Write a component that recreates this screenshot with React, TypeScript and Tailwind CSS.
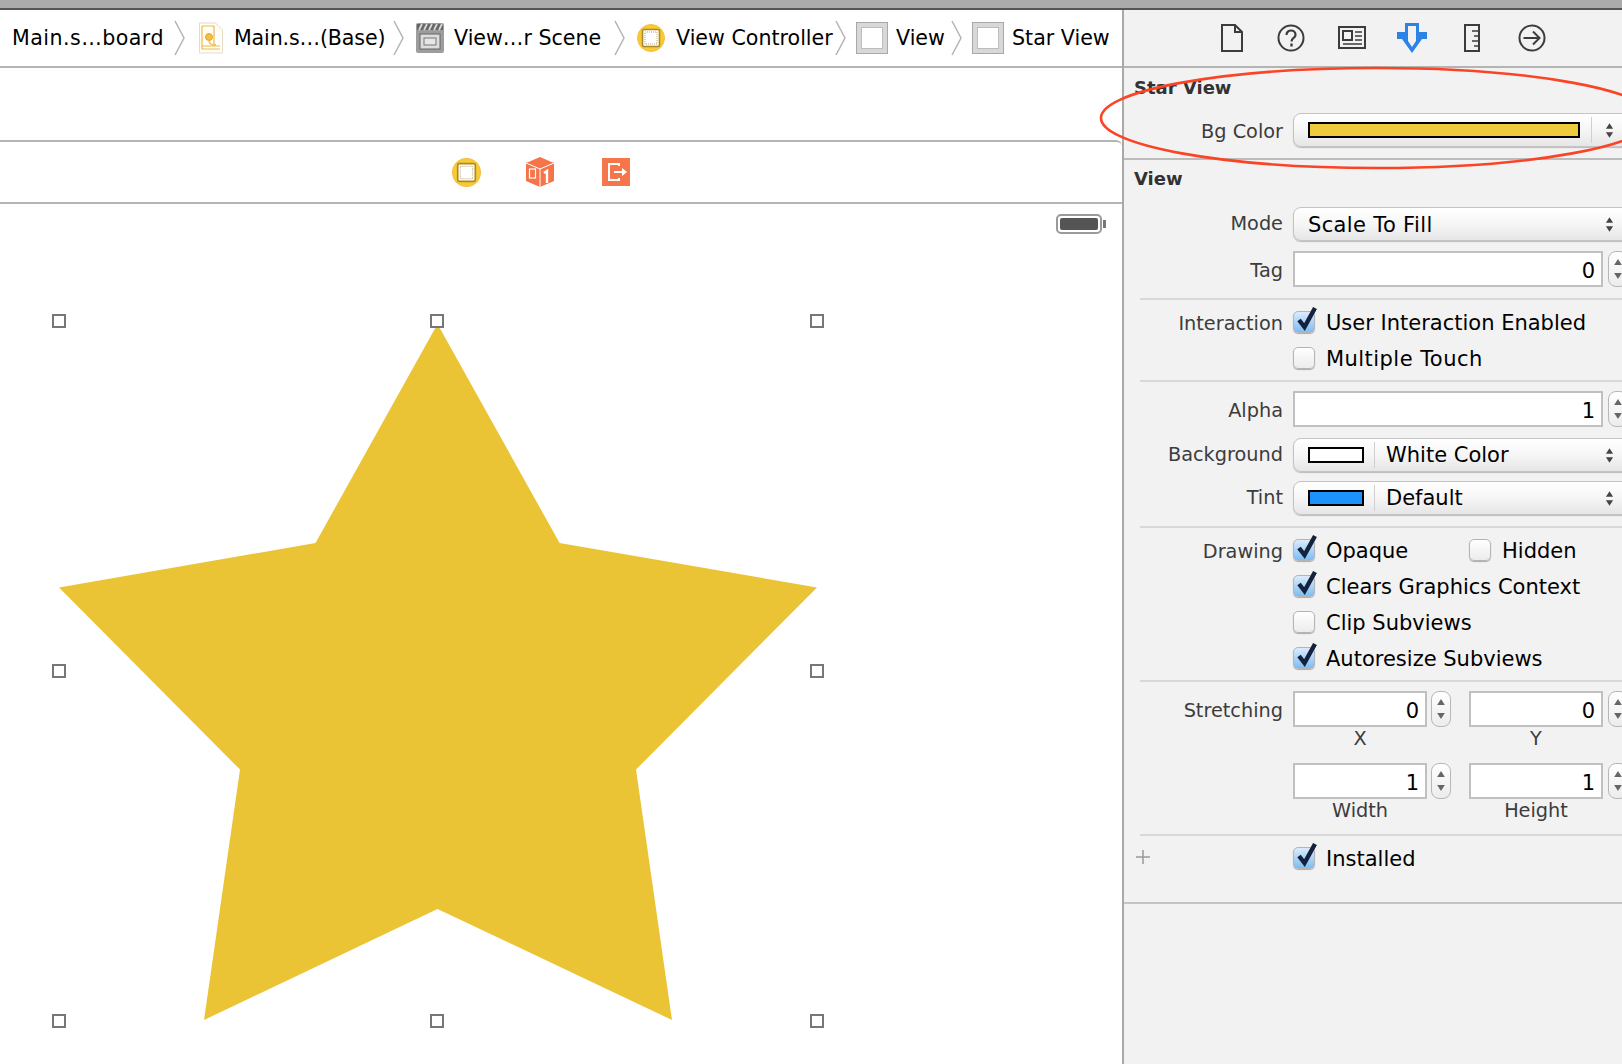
const STAR = '378.5,3 500.6,222 758,266.5 577,448.6 613,699 378.5,588 145,699 181,448.6 0,266.5 256.5,222';

function Chevron({ className }: { className: string }) {
  return (
    <svg width="11" height="36" viewBox="0 0 11 36" fill="none" className={className}>
      <path d="M1 1l9 17-9 17" stroke="#b4b4b4" strokeWidth="1.5" />
    </svg>
  );
}

function VCIcon({ size }: { size: number }) {
  return (
    <svg width={size} height={size} viewBox="0 0 28 28" className="shrink-0">
      <circle cx="14" cy="14" r="13.5" fill="#fbc931" stroke="#f2c04a" />
      <rect x="5.5" y="5.5" width="17" height="17" rx="1.5" fill="#fff" stroke="#a88a2c" strokeWidth="1.6" />
      <rect x="8" y="8" width="12" height="12" fill="#fff" stroke="#b9a66a" strokeDasharray="1 1" />
    </svg>
  );
}

function BoxIcon({ className }: { className: string }) {
  return (
    <div className={`w-8 h-8 shrink-0 bg-[#d8d8d8] border border-[#a8a8a8] p-[4px] ${className}`}>
      <div className="w-full h-full bg-white border border-[#bdbdbd]" />
    </div>
  );
}

function Crumb({ label, className }: { label: string; className: string }) {
  return <span className={`whitespace-nowrap text-black text-[20.6px] ${className}`}>{label}</span>;
}

function Arrows() {
  return (
    <svg width="9" height="17" viewBox="0 0 10 18" className="shrink-0">
      <path d="M5 1l4 6H1zM5 17l4-6H1z" fill="#444" />
    </svg>
  );
}

function Popup({ children }: { children: React.ReactNode }) {
  return (
    <div className="relative flex items-center h-[34px] w-[345px] rounded-lg border border-[#c4c4c4] bg-linear-to-b from-white via-[#f6f6f6] to-[#e6e6e6] text-black shadow-[0_1px_1px_#bbb] pl-[14px]">
      {children}
      <div className="absolute left-[311px] top-0 flex items-center h-full">
        <Arrows />
      </div>
    </div>
  );
}

function Stepper({ className }: { className: string }) {
  return (
    <div className={`flex flex-col items-center justify-center gap-[8px] w-[20px] h-[36px] shrink-0 rounded-lg border border-[#b8b8b8] bg-linear-to-b from-white to-[#ececec] ${className}`}>
      <svg width="8" height="6" viewBox="0 0 9 7"><path d="M4.5 0l4.5 7H0z" fill="#666" /></svg>
      <svg width="8" height="6" viewBox="0 0 9 7"><path d="M4.5 7L0 0h9z" fill="#666" /></svg>
    </div>
  );
}

function Field({ value, w }: { value: string; w: string }) {
  return (
    <div className={`flex items-center justify-end h-[36px] shrink-0 bg-white border-2 border-[#c0c0c0] pr-[6px] pt-[3px] text-black ${w}`}>
      {value}
    </div>
  );
}

function Check({ on }: { on?: boolean }) {
  return (
    <div
      className={`relative w-[22px] h-[22px] shrink-0 rounded-[5px] border border-[#b5b5b5] shadow-[0_1px_1px_#aaa] ${
        on ? 'bg-linear-to-b from-[#dcebfb] to-[#7dbcf4]' : 'bg-linear-to-b from-white to-[#ececec]'
      }`}
    >
      {on && (
        <svg width="24" height="28" viewBox="0 0 24 28" fill="none" className="absolute left-[1px] -top-[7px]">
          <path d="M4 15l5.5 7L20 3" stroke="#13233e" strokeWidth="4.4" />
        </svg>
      )}
    </div>
  );
}

function Row({ label, children, className, low }: { label?: string; children: React.ReactNode; className?: string; low?: boolean }) {
  return (
    <div className={`flex items-center ${className ?? ''}`}>
      <div className={`w-[159px] shrink-0 text-right text-[19.3px] text-[#3c3c3c] whitespace-nowrap ${low ? 'pt-[3px]' : ''}`}>{label}</div>
      <div className="ml-[10px] flex items-center">{children}</div>
    </div>
  );
}

function CheckRow({ label, text, on, textClass }: { label?: string; text: string; on?: boolean; textClass?: string }) {
  return (
    <Row label={label} className="h-[36px]" low>
      <Check on={on} />
      <span className={`ml-[11px] pt-[2px] text-black whitespace-nowrap ${textClass ?? ''}`}>{text}</span>
    </Row>
  );
}

function Divider({ className }: { className: string }) {
  return <div className={`ml-[16px] h-[2px] bg-[#d8d8d8] ${className}`} />;
}

function Handle({ className }: { className: string }) {
  return <div className={`absolute w-[14px] h-[14px] bg-white border-2 border-[#777] -translate-x-1/2 -translate-y-1/2 ${className}`} />;
}

function Breadcrumb() {
  return (
    <div className="flex items-center h-[56px] border-b-2 border-[#b4b4b4] box-content overflow-hidden">
      <Crumb label="Main.s…board" className="ml-[12px] w-[151px] tracking-[0.45px]" />
      <Chevron className="ml-[11px] shrink-0" />
      <svg width="26" height="32" viewBox="0 0 26 32" fill="none" className="ml-[13px] shrink-0">
        <path d="M1.5 1h16l7 7v23h-23z" fill="#fffef8" stroke="#e4dcc4" />
        <path d="M4 4h12v20M4 4v23h18M4 24h18" stroke="#eeb94a" strokeWidth="1.2" />
        <circle cx="11" cy="15" r="3.5" fill="#f5c040" stroke="#e8a32c" />
        <path d="M11 18c0 4 2 5 7 5" stroke="#eeb94a" strokeWidth="1.3" />
      </svg>
      <Crumb label="Main.s…(Base)" className="ml-[10px] w-[148px] -tracking-[0.15px]" />
      <Chevron className="ml-[11px] shrink-0" />
      <svg width="28" height="30" viewBox="0 0 28 30" fill="none" className="ml-[12px] shrink-0">
        <rect width="28" height="30" rx="2" fill="#9d9d9d" />
        <path d="M1 1h26v6H1z" fill="#666" />
        <path d="M3 7l3-6M8 7l3-6M13 7l3-6M18 7l3-6M23 7l3-6" stroke="#d8d8d8" strokeWidth="1.8" />
        <rect x="4" y="11" width="20" height="15" fill="#ddd" stroke="#666" />
        <rect x="8" y="15" width="12" height="7" fill="#e6e6e6" stroke="#777" />
      </svg>
      <Crumb label="View…r Scene" className="ml-[10px] w-[148px]" />
      <Chevron className="ml-[12px] shrink-0" />
      <div className="ml-[12px]"><VCIcon size={28} /></div>
      <Crumb label="View Controller" className="ml-[11px] w-[157px]" />
      <Chevron className="ml-[2px] shrink-0" />
      <BoxIcon className="ml-[10px]" />
      <Crumb label="View" className="ml-[8px] w-[49px]" />
      <Chevron className="ml-[6px] shrink-0" />
      <BoxIcon className="ml-[10px]" />
      <Crumb label="Star View" className="ml-[8px] w-[98px]" />
    </div>
  );
}

function SceneBar() {
  return (
    <div className="flex items-center h-[60px] border-y-2 border-[#b4b4b4] box-content rounded-tr-[6px]">
      <div className="ml-[452px]"><VCIcon size={29} /></div>
      <svg width="28" height="30" viewBox="0 0 28 30" className="ml-[45px] shrink-0">
        <path d="M14 0l14 6v18l-14 6-14-6V6z" fill="#f5744a" />
        <path d="M14 12v18M0 6l14 6 14-6" stroke="#fff" strokeWidth="1" fill="none" />
        <rect x="3.5" y="12" width="6" height="9" fill="none" stroke="#fff" strokeWidth="1.2" />
        <path d="M18 16l3-2v12" stroke="#fff" strokeWidth="2.4" fill="none" />
      </svg>
      <svg width="28" height="28" viewBox="0 0 28 28" className="ml-[48px] shrink-0">
        <rect width="28" height="28" fill="#f6764c" />
        <path d="M17 8V6H7v16h10v-2" stroke="#fff" strokeWidth="2" fill="none" />
        <path d="M12 13h8v-3l5 4-5 4v-3h-8z" fill="#fff" />
      </svg>
    </div>
  );
}

function Canvas() {
  return (
    <div className="pt-[10px]">
      <div className="flex justify-end pr-[16px]">
        <svg width="50" height="20" viewBox="0 0 50 20">
          <rect x="1" y="1" width="44" height="18" rx="4" fill="#fff" stroke="#9a9a9a" strokeWidth="2" />
          <rect x="4" y="4" width="38" height="12" rx="2" fill="#555" />
          <rect x="47" y="6" width="3" height="8" fill="#777" />
        </svg>
      </div>
      <div className="relative ml-[59px] mt-[87px] w-[758px] h-[700px]">
        <svg width="758" height="700" viewBox="0 0 758 700">
          <polygon points={STAR} fill="#ebc436" />
        </svg>
        <Handle className="left-0 top-0" />
        <Handle className="left-[378px] top-0" />
        <Handle className="left-full top-0" />
        <Handle className="left-0 top-1/2" />
        <Handle className="left-full top-1/2" />
        <Handle className="left-0 top-full" />
        <Handle className="left-[378px] top-full" />
        <Handle className="left-full top-full" />
      </div>
    </div>
  );
}

function InspectorTabs() {
  return (
    <div className="flex items-center h-[56px] border-b-2 border-[#b4b4b4] box-content text-[#333]">
      <svg width="24" height="28" viewBox="0 0 24 28" fill="none" stroke="#3c3c3c" strokeWidth="2" className="ml-[96px]">
        <path d="M2 1h13l7 7v19H2zM15 1v7h7" />
      </svg>
      <svg width="28" height="28" viewBox="0 0 28 28" fill="none" stroke="#3c3c3c" strokeWidth="2" className="ml-[33px]">
        <circle cx="14" cy="14" r="12.5" />
        <path d="M9.5 11c0-6 9-6 9 0 0 3-4 3-4 6.5" strokeWidth="2.2" />
        <path d="M14.5 19.5v3" strokeWidth="2.4" />
      </svg>
      <svg width="28" height="24" viewBox="0 0 28 24" fill="none" stroke="#3c3c3c" strokeWidth="2" className="ml-[33px]">
        <rect x="1" y="1" width="26" height="21" />
        <rect x="5" y="5" width="9" height="9" />
        <path d="M17 6h7M17 10h7M17 14h7M5 18h19" strokeWidth="1.6" />
      </svg>
      <svg width="30" height="30" viewBox="0 0 30 30" className="ml-[31px]">
        <path d="M8 0h14v9h8v7h-5L15 30 5 16H0V9h8z" fill="#2b83e6" />
        <path d="M11 3h8v15l-4 6-4-6z" fill="#f2f2f2" />
      </svg>
      <svg width="16" height="28" viewBox="0 0 16 28" fill="none" stroke="#3c3c3c" strokeWidth="2" className="ml-[37px]">
        <rect x="1" y="1" width="14" height="26" />
        <path d="M8 7h7M10 12h5M8 17h7M10 22h5" strokeWidth="1.6" />
      </svg>
      <svg width="28" height="28" viewBox="0 0 28 28" fill="none" stroke="#3c3c3c" strokeWidth="2" className="ml-[38px]">
        <circle cx="14" cy="14" r="12.5" />
        <path d="M5.5 14h16M15 7.5l6.5 6.5-6.5 6.5" />
      </svg>
    </div>
  );
}

function Swatch({ color, w }: { color: string; w: string }) {
  return <div className={`h-[16px] border-2 border-black shrink-0 ${color} ${w}`} />;
}

function SwatchPopup({ color, text }: { color: string; text: string }) {
  return (
    <Popup>
      <Swatch color={color} w="w-[56px]" />
      <div className="ml-[10px] w-[1px] h-[26px] bg-[#d0d0d0]" />
      <span className="ml-[11px]">{text}</span>
    </Popup>
  );
}

export default function App() {
  return (
    <div className="relative w-[1622px] h-[1064px] overflow-hidden bg-white font-['DejaVu_Sans',sans-serif] text-[21px] leading-[22px]">
      <div className="h-[8px] bg-[#ababab]" />
      <div className="h-[2px] bg-[#555]" />
      <div className="flex h-[1054px]">
        <div className="w-[1122px] shrink-0">
          <Breadcrumb />
          <div className="h-[72px]" />
          <SceneBar />
          <Canvas />
        </div>
        <div className="w-[2px] shrink-0 bg-[#a9a9a9]" />
        <div className="flex-1 min-w-0 overflow-hidden bg-[#f2f2f2]">
          <InspectorTabs />
          <div className="h-[92px] border-b-2 border-[#bcbcbc] pt-[9px]">
            <div className="ml-[10px] text-[18px] font-bold text-[#333]">Star View</div>
            <Row label="Bg Color" className="mt-[14px]" low>
              <Popup>
                <Swatch color="bg-[#eecb3a]" w="w-[272px]" />
                <div className="ml-[11px] w-[1px] h-[26px] bg-[#d0d0d0]" />
              </Popup>
            </Row>
          </div>
          <div className="pt-[8px]">
            <div className="ml-[10px] text-[18px] font-bold text-[#333]">View</div>
            <Row label="Mode" className="mt-[17px]">
              <Popup><span className="pt-[1px] tracking-[0.35px]">Scale To Fill</span></Popup>
            </Row>
            <Row label="Tag" className="mt-[10px]" low>
              <Field value="0" w="w-[310px]" />
              <Stepper className="ml-[5px]" />
            </Row>
            <Divider className="mt-[11px]" />
            <div className="mt-[4px]">
              <CheckRow label="Interaction" text="User Interaction Enabled" on />
              <CheckRow text="Multiple Touch" textClass="tracking-[0.45px]" />
            </div>
            <Divider className="mt-[4px]" />
            <Row label="Alpha" className="mt-[9px]" low>
              <Field value="1" w="w-[310px]" />
              <Stepper className="ml-[5px]" />
            </Row>
            <Row label="Background" className="mt-[11px]">
              <SwatchPopup color="bg-white" text="White Color" />
            </Row>
            <Row label="Tint" className="mt-[9px]">
              <SwatchPopup color="bg-[#1c92fb]" text="Default" />
            </Row>
            <Divider className="mt-[11px]" />
            <div className="mt-[4px]">
              <Row label="Drawing" className="h-[36px]" low>
                <Check on />
                <span className="ml-[11px] pt-[2px] w-[143px] text-black">Opaque</span>
                <Check />
                <span className="ml-[11px] pt-[2px] text-black">Hidden</span>
              </Row>
              <CheckRow text="Clears Graphics Context" on />
              <CheckRow text="Clip Subviews" />
              <CheckRow text="Autoresize Subviews" on />
            </div>
            <Divider className="mt-[4px]" />
            <Row label="Stretching" className="mt-[9px]" low>
              <Field value="0" w="w-[134px]" />
              <Stepper className="ml-[4px]" />
              <div className="ml-[18px] flex items-center">
                <Field value="0" w="w-[134px]" />
                <Stepper className="ml-[5px]" />
              </div>
            </Row>
            <Row>
              <div className="w-[134px] h-[24px] flex items-center justify-center text-[19.3px] text-[#3c3c3c]">X</div>
              <div className="ml-[42px] w-[134px] h-[24px] flex items-center justify-center text-[19.3px] text-[#3c3c3c]">Y</div>
            </Row>
            <Row className="mt-[12px]">
              <Field value="1" w="w-[134px]" />
              <Stepper className="ml-[4px]" />
              <div className="ml-[18px] flex items-center">
                <Field value="1" w="w-[134px]" />
                <Stepper className="ml-[5px]" />
              </div>
            </Row>
            <Row>
              <div className="w-[134px] h-[24px] flex items-center justify-center text-[19.3px] text-[#3c3c3c]">Width</div>
              <div className="ml-[42px] w-[134px] h-[24px] flex items-center justify-center text-[19.3px] text-[#3c3c3c]">Height</div>
            </Row>
            <Divider className="mt-[11px]" />
            <div className="relative mt-[4px]">
              <CheckRow text="Installed" on />
              <svg width="16" height="16" viewBox="0 0 16 16" className="absolute left-[11px] top-[9px]">
                <path d="M8 1v14M1 8h14" stroke="#999" strokeWidth="1.5" />
              </svg>
            </div>
            <div className="mt-[26px] h-[2px] bg-[#c4c4c4]" />
          </div>
        </div>
      </div>
      {/* red annotation drawn over the inspector */}
      <svg width="1622" height="1064" viewBox="0 0 1622 1064" fill="none" className="absolute left-0 top-0 pointer-events-none">
        <ellipse cx="1377" cy="118" rx="276" ry="50" stroke="#fb4326" strokeWidth="2.6" />
      </svg>
    </div>
  );
}
